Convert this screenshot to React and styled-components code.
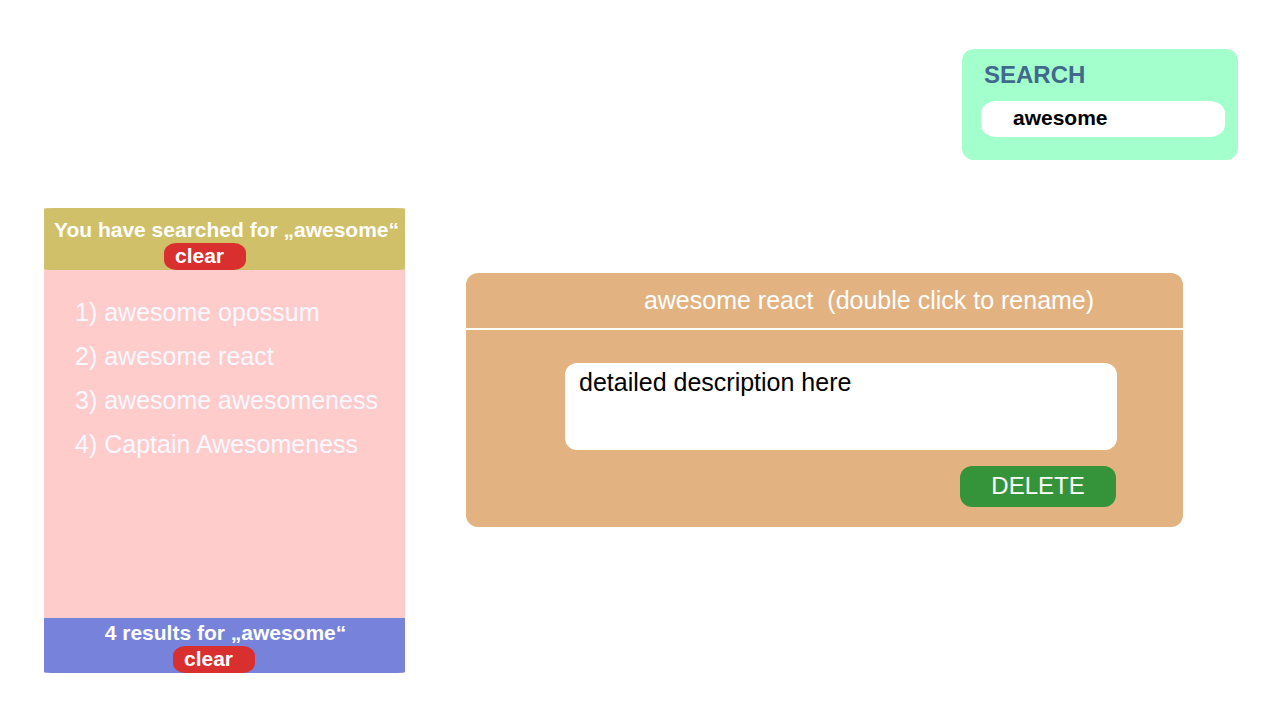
import React, { useState } from "react";
import styled, { createGlobalStyle } from "styled-components";

const GlobalStyle = createGlobalStyle`
  *, *::before, *::after { box-sizing: border-box; }
  body {
    margin: 0;
    background: #fff;
    font-family: "Liberation Sans", Arial, Helvetica, sans-serif;
    font-size: 25px;
    line-height: 30px;
  }
  button, input, textarea {
    border: 0;
    margin: 0;
    padding: 0;
    font-family: inherit;
  }
  h1, h2, p, ol { margin: 0; padding: 0; font-weight: inherit; }
`;

const Page = styled.div`
  display: flex;
  flex-direction: column;
  gap: 48px;
  padding: 49px 42px 47px 44px;
`;

const SearchCard = styled.form`
  display: flex;
  flex-direction: column;
  gap: 12px;
  align-self: flex-end;
  width: 276px;
  padding: 12px 13px 23px 19px;
  border-radius: 12px;
  background: #a3ffcc;
`;

const SearchLabel = styled.label`
  padding-left: 3px;
  color: #40698c;
  font-size: 24px;
  font-weight: bold;
  line-height: 28px;
`;

const SearchInput = styled.input`
  width: 100%;
  height: 36px;
  padding: 0 32px 2px;
  border-radius: 16px / 12px;
  background: #fff;
  color: #000;
  font-size: 21px;
  font-weight: bold;
`;

const Content = styled.main`
  display: grid;
  grid-template-columns: 361fr 717fr;
  gap: 61px;
  align-items: start;
  padding-right: 55px;
`;

const Sidebar = styled.section`
  display: flex;
  flex-direction: column;
  min-width: 0;
  background: #ffcccc;
  border-radius: 12px / 1px;
`;

const Band = styled.div`
  display: flex;
  flex-direction: column;
  align-items: center;
  color: #fff;
  font-size: 21px;
  font-weight: bold;
  line-height: 26px;
  white-space: nowrap;
`;

const SearchedBand = styled(Band)`
  padding: 9px 0 0 4px;
  border-radius: 12px / 1px;
  background: #cfc069;
`;

const CountBand = styled(Band)`
  padding: 2px 0 0 2px;
  border-radius: 0 0 12px 12px / 0 0 1px 1px;
  background: #7782db;
`;

const ClearButton = styled.button`
  width: 82px;
  height: 27px;
  margin-right: ${({ $shift }) => $shift}px;
  padding: 0 0 2px 11px;
  border-radius: 12px / 10px;
  background: #d92f2f;
  color: #fff;
  font-size: 21px;
  font-weight: bold;
  line-height: 25px;
  text-align: left;
`;

const ResultList = styled.ol`
  min-height: 348px;
  padding: 20px 0 0 31px;
  list-style: none;
  color: #f8f8ff;
`;

const ResultItem = styled.li`
  line-height: 44px;
`;

const Detail = styled.article`
  min-width: 0;
  margin-top: 65px;
  border-radius: 12px;
  background: #e2b281;
`;

const DetailTitle = styled.h1`
  padding: 12px 0 13px 89px;
  border-bottom: 2px solid #fff;
  color: #fff;
  font-size: 25px;
  line-height: 30px;
  text-align: center;
  white-space: pre;
`;

const DetailBody = styled.div`
  display: flex;
  flex-direction: column;
  gap: 16px;
  padding: 33px 66px 20px 99px;
`;

const Description = styled.textarea`
  width: 100%;
  height: 87px;
  padding: 4px 14px;
  border-radius: 12px;
  background: #fff;
  color: #000;
  font-size: 25px;
  line-height: 30px;
  resize: none;
`;

const DeleteButton = styled.button`
  align-self: flex-end;
  width: 156px;
  height: 41px;
  margin-right: 1px;
  padding-bottom: 2px;
  border-radius: 12px;
  background: #359439;
  color: #fff;
  font-size: 24px;
`;

const results = [
  "awesome opossum",
  "awesome react",
  "awesome awesomeness",
  "Captain Awesomeness",
];

export default function App() {
  const [query, setQuery] = useState("awesome");
  const [description, setDescription] = useState("detailed description here");
  const clear = () => setQuery("");

  return (
    <>
      <GlobalStyle />
      <Page>
        <SearchCard role="search" onSubmit={(e) => e.preventDefault()}>
          <SearchLabel htmlFor="search">SEARCH</SearchLabel>
          <SearchInput
            id="search"
            type="text"
            value={query}
            onChange={(e) => setQuery(e.target.value)}
          />
        </SearchCard>
        <Content>
          <Sidebar>
            <SearchedBand>
              <p>You have searched for „{query}“</p>
              <ClearButton type="button" $shift={43} onClick={clear}>clear</ClearButton>
            </SearchedBand>
            <ResultList>
              {results.map((name, i) => (
                <ResultItem key={name}>{`${i + 1}) ${name}`}</ResultItem>
              ))}
            </ResultList>
            <CountBand>
              <p>{`${results.length} results for „${query}“`}</p>
              <ClearButton type="button" $shift={23} onClick={clear}>clear</ClearButton>
            </CountBand>
          </Sidebar>
          <Detail>
            <DetailTitle>{"awesome react  (double click to rename)"}</DetailTitle>
            <DetailBody>
              <Description
                aria-label="Description"
                value={description}
                onChange={(e) => setDescription(e.target.value)}
              />
              <DeleteButton type="button">DELETE</DeleteButton>
            </DetailBody>
          </Detail>
        </Content>
      </Page>
    </>
  );
}
